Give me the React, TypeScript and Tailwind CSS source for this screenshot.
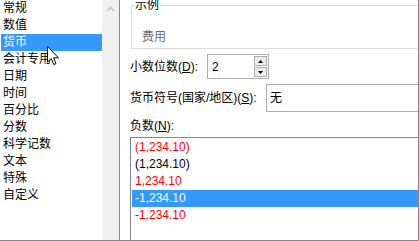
import React from "react";

const font = { fontFamily: '"Liberation Sans", "Noto Sans CJK SC", sans-serif' };

const cats = ["常规", "数值", "货币", "会计专用", "日期", "时间", "百分比", "分数", "科学记数", "文本", "特殊", "自定义"];

const negs: { t: string; c: string; sel?: boolean }[] = [
  { t: "(1,234.10)", c: "text-[#ff0000]" },
  { t: "(1,234.10)", c: "text-black" },
  { t: "1,234.10", c: "text-[#ff0000]" },
  { t: "-1,234.10", c: "text-white", sel: true },
  { t: "-1,234.10", c: "text-[#ff0000]" },
];

export default function App() {
  return (
    <div
      className="relative w-[419px] h-[241px] overflow-hidden bg-white flex border-r border-b border-[#828790] text-[12px] text-black"
      style={font}
    >
      {/* left category list */}
      <div className="w-[120px] shrink-0 h-full flex border-r border-[#828790]">
        <div className="w-[102px] flex flex-col pl-[1px]">
          {cats.map((c, i) =>
            i === 2 ? (
              <div
                key={c}
                className="h-[17px] leading-[15px] pl-[1px] bg-[#3399ff] text-white border border-dotted border-[#c97a2c]"
              >
                {c}
              </div>
            ) : (
              <div key={c} className="h-[17px] leading-[17px] pl-[2px]">
                {c}
              </div>
            )
          )}
        </div>
        <div className="w-[17px] h-full bg-[#f0f0f0] flex justify-center pt-[6px]">
          <svg width="9" height="6" viewBox="0 0 9 6">
            <path d="M1 5 L4.5 1.5 L8 5" fill="none" stroke="#c2c2c2" strokeWidth="1.6" />
          </svg>
        </div>
      </div>

      {/* right panel */}
      <div className="flex-1 flex flex-col pl-[10px]">
        {/* 示例 group */}
        <div className="relative mt-[5px] ml-px h-[44px] border border-r-0 border-[#dcdcdc] flex flex-col">
          <span className="absolute -top-[7px] left-[2px] bg-white px-px leading-[12px]">示例</span>
          <span className="mt-[24px] ml-[10px] leading-[14px] text-[#6d6d6d]">费用</span>
        </div>

        {/* 小数位数 */}
        <div className="mt-[5px] flex items-center h-[25px]">
          <span className="w-[77px] leading-[14px]">
            小数位数(<u>D</u>):
          </span>
          <div className="w-[62px] h-[25px] border border-[#abadb3] flex items-center">
            <span className="flex-1 pl-[4px] leading-[14px]">2</span>
            <div className="flex flex-col gap-px mr-px">
              <div className="w-[13px] h-[10px] bg-[#ececec] border border-[#acacac] flex items-center justify-center">
                <svg width="5" height="3" viewBox="0 0 5 3">
                  <path d="M0 3 L2.5 0 L5 3 Z" fill="#000" />
                </svg>
              </div>
              <div className="w-[13px] h-[10px] bg-[#ececec] border border-[#acacac] flex items-center justify-center">
                <svg width="5" height="3" viewBox="0 0 5 3">
                  <path d="M0 0 L2.5 3 L5 0 Z" fill="#000" />
                </svg>
              </div>
            </div>
          </div>
        </div>

        {/* 货币符号 */}
        <div className="mt-[5px] flex items-center h-[28px]">
          <span className="w-[136px] leading-[14px]">
            货币符号(国家/地区)(<u>S</u>):
          </span>
          <div className="flex-1 h-[28px] border border-r-0 border-[#abadb3] flex items-center pl-[3px]">
            <span className="leading-[14px]">无</span>
          </div>
        </div>

        {/* 负数 */}
        <span className="mt-[6px] leading-[16px] h-[16px]">
          负数(<u>N</u>):
        </span>
        <div className="mt-[3px] flex-1 border-t border-l border-[#828790] flex flex-col pt-px pl-px">
          {negs.map((n, i) => (
            <div
              key={i}
              className={`h-[17px] leading-[17px] pl-[3px] ${n.c} ${n.sel ? "bg-[#3399ff]" : ""}`}
            >
              {n.t}
            </div>
          ))}
        </div>
      </div>

      {/* mouse cursor */}
      <svg
        className="absolute left-[47px] top-[46px]"
        width="13"
        height="20"
        viewBox="0 0 13 20"
      >
        <path
          d="M0.5 0.5 L0.5 16 L4.2 12.6 L6.8 18.6 L9 17.6 L6.5 11.8 L11.5 11.8 Z"
          fill="#fff"
          stroke="#000"
          strokeWidth="1"
          strokeLinejoin="miter"
        />
      </svg>
    </div>
  );
}
